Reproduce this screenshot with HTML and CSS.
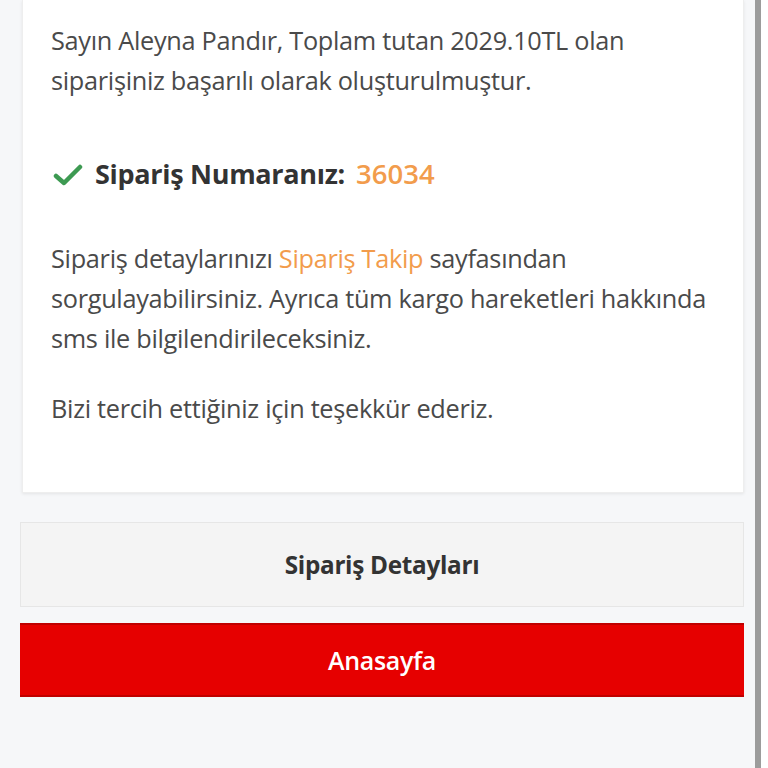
FILE: index.html
```html
<!DOCTYPE html>
<html lang="tr">
<head>
<meta charset="utf-8">
<link rel="stylesheet" href="styles.css">
</head>
<body>
<div class="frame">
  <div class="content">
    <div class="card">
      <p class="para">Sayın Aleyna Pandır, Toplam tutan 2029.10TL olan siparişiniz başarılı olarak oluşturulmuştur.</p>
      <div class="order">
        <svg class="check" viewBox="0 0 30 24" width="30" height="24"><path d="M3 13 L11 20 L27 4" fill="none" stroke="#3d9a52" stroke-width="4.5" stroke-linecap="round" stroke-linejoin="round"/></svg>
        <span class="order-label">Sipariş Numaranız:</span>
        <span class="order-no">36034</span>
      </div>
      <p class="para para-track">Sipariş detaylarınızı <span class="link">Sipariş Takip</span> sayfasından sorgulayabilirsiniz. Ayrıca tüm kargo hareketleri hakkında sms ile bilgilendirileceksiniz.</p>
      <p class="para para-thanks">Bizi tercih ettiğiniz için teşekkür ederiz.</p>
    </div>
    <div class="btn btn-details">Sipariş Detayları</div>
    <div class="btn btn-home">Anasayfa</div>
  </div>
</div>
</body>
</html>
```
FILE: styles.css
```css
html, body {
  margin: 0;
  padding: 0;
  background: #ffffff;
}
.frame {
  width: 761px;
  min-height: 768px;
  background: #f6f7f9;
  border-right: 6px solid #9c9c9c;
  box-sizing: border-box;
  font-family: "Open Sans", "Noto Sans", sans-serif;
}
.content {
  padding: 0 11px 0 20px;
  display: flex;
  flex-direction: column;
}
.card {
  background: #ffffff;
  margin: 0 0 0 2px;
  padding: 20px 12px 64px 28px;
  box-shadow: 0 1px 3px rgba(0,0,0,0.08);
  border: 1px solid #eeeeee;
  border-top: none;
}
.para {
  margin: 0;
  font-size: 25.3px;
  line-height: 40px;
  color: #4a4a4a;
  letter-spacing: -0.3px;
}
.order {
  display: flex;
  align-items: center;
  height: 40px;
  margin-top: 53px;
  font-size: 27px;
}
.check {
  margin-left: 2px;
  margin-top: 4px;
  margin-right: 12px;
}
.order-label {
  font-weight: 700;
  color: #333333;
  letter-spacing: -0.3px;
}
.order-no {
  color: #f29c4c;
  font-weight: 600;
  font-size: 27.5px;
  margin-left: 11px;
}
.para-track {
  margin-top: 45px;
}
.para-thanks {
  margin-top: 30px;
}
.link {
  color: #f29c4c;
}
.btn {
  display: flex;
  align-items: center;
  justify-content: center;
  box-sizing: border-box;
}
.btn-details {
  margin-top: 29px;
  height: 85px;
  background: #f4f4f4;
  border: 1px solid #e6e6e6;
  color: #333333;
  font-weight: 700;
  font-size: 24.3px;
  letter-spacing: -0.3px;
}
.btn-home {
  margin-top: 16px;
  height: 74px;
  background: #e60000;
  border-top: 2px solid #c00000;
  border-bottom: 2px solid #c00000;
  color: #ffffff;
  font-weight: 600;
  font-size: 25px;
  letter-spacing: -0.3px;
}
```
